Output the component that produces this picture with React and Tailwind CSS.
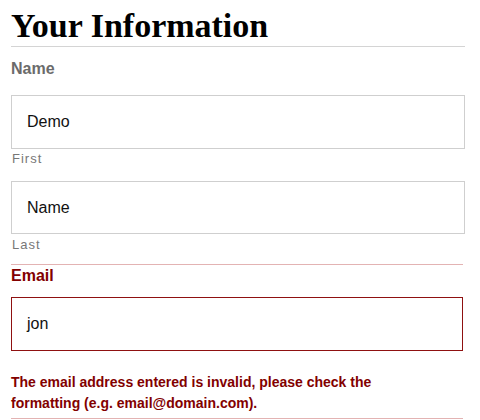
import React from 'react';

const sans = "font-['Liberation_Sans',Arial,sans-serif]";

const App = () => {
    return (
        <div className={`w-[480px] h-[420px] overflow-hidden bg-white px-[11px] ${sans}`}>
            <div className="w-[454px]">
                {/* Heading */}
                <h1 className="h-[47px] pt-[5px] leading-[41px] border-b border-[#d4d4d4] font-['Liberation_Serif',serif] font-bold text-[34px] text-black">
                    Your Information
                </h1>

                {/* Name */}
                <div className="mt-[12px] leading-[20px] text-[16px] font-bold text-[#6b6b6b]">Name</div>

                <div className="mt-[16px] h-[54px] border border-[#cfcfcf] flex items-center pl-[15px] text-[16px] text-[#111]">
                    Demo
                </div>
                <div className="mt-[1px] pl-[1px] leading-[18px] text-[13px] tracking-[1px] text-[#777]">First</div>

                <div className="mt-[13px] h-[53px] border border-[#cfcfcf] flex items-center pl-[15px] text-[16px] text-[#111]">
                    Name
                </div>
                <div className="mt-[2px] pl-[1px] leading-[18px] text-[13px] tracking-[1px] text-[#777]">Last</div>

                {/* Email (error state) */}
                <div className="mt-[10px] mr-[2px] border-t border-b border-[#e3b3b3] pb-[4px]">
                    <div className="pt-[1px] leading-[20px] text-[16px] font-bold text-[#820000]">Email</div>
                    <div className="mt-[11px] h-[54px] border border-[#8f1111] flex items-center pl-[15px] text-[16px] text-[#111]">
                        jon
                    </div>
                    <p className="mt-[21px] w-[410px] leading-[21px] text-[14px] font-bold text-[#820000]">
                        The email address entered is invalid, please check the formatting (e.g. email@domain.com).
                    </p>
                </div>
            </div>
        </div>
    );
};

export default App;
